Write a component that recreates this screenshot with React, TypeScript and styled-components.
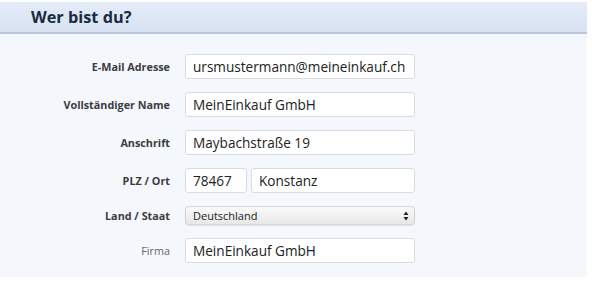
import React from "react";
import styled, { createGlobalStyle } from "styled-components";

const Global = createGlobalStyle`
  html, body { margin: 0; padding: 0; background: #ffffff; }
  body { font-family: "Open Sans", "Noto Sans", sans-serif; }
  * { box-sizing: border-box; }
`;

const Panel = styled.section`
  width: 587px;
  margin-top: 2px;
  background: #f4f8fc;
`;

const Header = styled.header`
  height: 32px;
  display: flex;
  align-items: center;
  padding-left: 31px;
  background: linear-gradient(#e4ecf8, #d8e2f2);
  border-bottom: 2px solid #bcc6da;
`;

const Title = styled.h2`
  margin: 0;
  font-size: 16.3px;
  font-weight: 700;
  color: #1b2b42;
`;

const Body = styled.div`
  padding: 20px 0 14px;
  display: flex;
  flex-direction: column;
  gap: 13px;
`;

const Row = styled.div`
  display: flex;
  align-items: center;
  gap: 15px;
`;

const Label = styled.label<{ $optional?: boolean }>`
  width: 170px;
  text-align: right;
  font-size: 10.8px;
  font-weight: ${(p) => (p.$optional ? 400 : 700)};
  color: ${(p) => (p.$optional ? "#666666" : "#3c3c3c")};
`;

const Fields = styled.div`
  width: 230px;
  display: flex;
  gap: 4px;
`;

const Input = styled.input<{ $w?: number }>`
  ${(p) => (p.$w ? `width: ${p.$w}px; flex: none;` : "flex: 1; min-width: 0;")}
  height: 25px;
  padding: 0 6px 0 7px;
  border: 1px solid #d8dce2;
  border-radius: 3px;
  background: #fff;
  font-family: "Open Sans", sans-serif;
  font-size: 13.6px;
  color: #222;
  outline: none;
`;

const SelectBox = styled.div`
  position: relative;
  width: 230px;
  height: 19px;
  border-radius: 4px;
  background: linear-gradient(#fbfbfb, #e6e6e6);
  box-shadow: inset 0 0 0 1px #d4d4d4, 0 1px 1px rgba(0,0,0,0.08);
  display: flex;
  align-items: center;
  padding: 0 8px;
  font-size: 11px;
  color: #222;
`;

const Arrows = styled.svg`
  position: absolute;
  right: 6px;
  top: 5px;
`;

export default function App() {
  return (
    <>
      <Global />
      <Panel>
        <Header>
          <Title>Wer bist du?</Title>
        </Header>
        <Body>
          <Row>
            <Label>E-Mail Adresse</Label>
            <Fields>
              <Input defaultValue="ursmustermann@meineinkauf.ch" />
            </Fields>
          </Row>
          <Row>
            <Label>Vollständiger Name</Label>
            <Fields>
              <Input defaultValue="MeinEinkauf GmbH" />
            </Fields>
          </Row>
          <Row>
            <Label>Anschrift</Label>
            <Fields>
              <Input defaultValue="Maybachstraße 19" />
            </Fields>
          </Row>
          <Row>
            <Label>PLZ / Ort</Label>
            <Fields>
              <Input $w={62} defaultValue="78467" />
              <Input defaultValue="Konstanz" />
            </Fields>
          </Row>
          <Row>
            <Label>Land / Staat</Label>
            <SelectBox>
              Deutschland
              <Arrows width="6" height="10" viewBox="0 0 6 10">
                <path d="M3 0.5 L5.5 4 H0.5 Z" fill="#222" />
                <path d="M3 9.5 L5.5 6 H0.5 Z" fill="#222" />
              </Arrows>
            </SelectBox>
          </Row>
          <Row>
            <Label $optional>Firma</Label>
            <Fields>
              <Input defaultValue="MeinEinkauf GmbH" />
            </Fields>
          </Row>
        </Body>
      </Panel>
    </>
  );
}
